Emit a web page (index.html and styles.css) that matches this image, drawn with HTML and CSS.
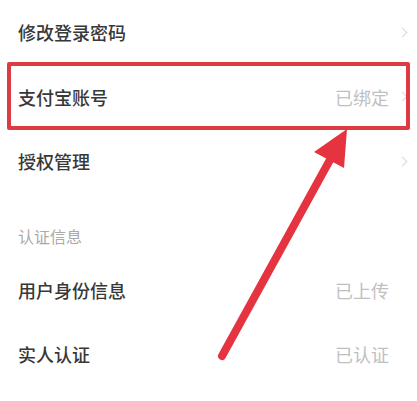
FILE: index.html
```html
<!DOCTYPE html>
<html lang="zh-CN">
<head>
<meta charset="utf-8">
<link rel="stylesheet" href="styles.css">
</head>
<body>
<div class="page">
  <div class="list">
    <div class="row"><span class="label">修改登录密码</span><span class="right"><span class="chev"></span></span></div>
    <div class="row"><span class="label">支付宝账号</span><span class="right"><span class="value">已绑定</span><span class="chev"></span></span></div>
    <div class="row"><span class="label">授权管理</span><span class="right"><span class="chev"></span></span></div>
    <div class="section">认证信息</div>
    <div class="row"><span class="label">用户身份信息</span><span class="right"><span class="value">已上传</span><span class="chev hidden"></span></span></div>
    <div class="row"><span class="label">实人认证</span><span class="right"><span class="value">已认证</span><span class="chev hidden"></span></span></div>
  </div>
  <div class="highlight"></div>
  <svg class="arrow" width="417" height="401" viewBox="0 0 417 401">
    <line x1="222" y1="356" x2="331" y2="158" stroke="#e5343f" stroke-width="8" stroke-linecap="round"/>
    <polygon points="347,129 314,152 344,168" fill="#e5343f"/>
  </svg>
</div>
</body>
</html>
```
FILE: styles.css
```css
html, body {
  margin: 0;
  padding: 0;
  background: #ffffff;
}
.page {
  position: relative;
  width: 417px;
  height: 401px;
  overflow: hidden;
  font-family: "Noto Sans CJK SC", "Noto Sans", sans-serif;
}
.list {
  display: flex;
  flex-direction: column;
  padding: 0 9px 0 18px;
}
.row {
  height: 64.5px;
  display: flex;
  align-items: center;
  justify-content: space-between;
}
.label {
  font-size: 18px;
  font-weight: 500;
  color: #383838;
  line-height: 24px;
}
.right {
  display: flex;
  align-items: center;
  gap: 10px;
}
.value {
  font-size: 18px;
  color: #c0c0c0;
  line-height: 24px;
}
.chev {
  width: 6px;
  height: 6px;
  border-top: 1.5px solid #d8d8d8;
  border-right: 1.5px solid #d8d8d8;
  transform: rotate(45deg);
  margin-right: 2px;
}
.chev.hidden {
  visibility: hidden;
}
.section {
  height: 64px;
  box-sizing: border-box;
  padding-top: 32px;
  font-size: 16px;
  line-height: 20px;
  color: #aaaaaa;
}
.highlight {
  position: absolute;
  left: 7px;
  top: 62px;
  width: 403px;
  height: 68px;
  box-sizing: border-box;
  border: 4.5px solid #dd3a43;
  border-radius: 2px;
}
.arrow {
  position: absolute;
  left: 0;
  top: 0;
}
```
